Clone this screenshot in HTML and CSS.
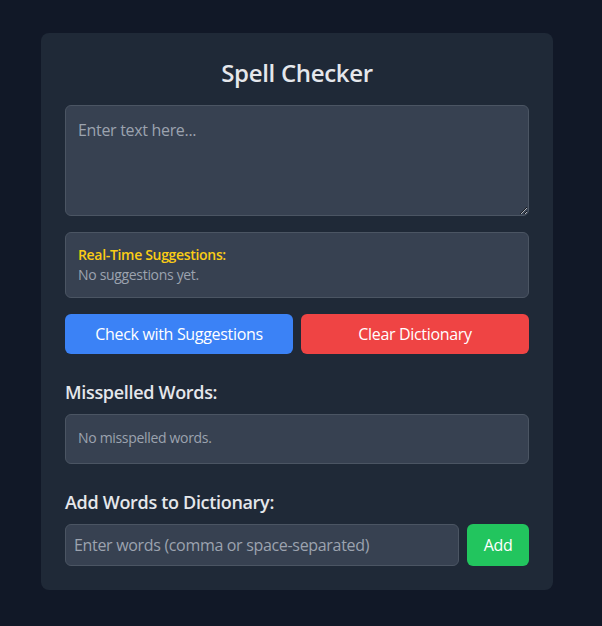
FILE: index.html
```html
<!DOCTYPE html>
<html lang="en">
<head>
<meta charset="utf-8">
<title>Spell Checker</title>
<link rel="stylesheet" href="styles.css">
</head>
<body>
<div class="page">
  <div class="card">
    <h1 class="title">Spell Checker</h1>
    <textarea class="text-input" placeholder="Enter text here..."></textarea>
    <div class="suggest-box">
      <div class="suggest-label">Real-Time Suggestions:</div>
      <div class="muted">No suggestions yet.</div>
    </div>
    <div class="btn-row">
      <button class="btn btn-blue">Check with Suggestions</button>
      <button class="btn btn-red">Clear Dictionary</button>
    </div>
    <h2 class="section-title">Misspelled Words:</h2>
    <div class="result-box"><span class="muted">No misspelled words.</span></div>
    <h2 class="section-title">Add Words to Dictionary:</h2>
    <div class="add-row">
      <input class="word-input" type="text" placeholder="Enter words (comma or space-separated)">
      <button class="btn btn-green">Add</button>
    </div>
  </div>
</div>
</body>
</html>
```
FILE: styles.css
```css
* { box-sizing: border-box; }
html, body { margin: 0; padding: 0; }
body {
  background: #111827;
  font-family: "Open Sans", "Noto Sans", sans-serif;
  letter-spacing: -0.02em;
  color: #e5e7eb;
  font-size: 16px;
  line-height: 24px;
}
.page {
  padding: 33px 0 0 41px;
}
.card {
  width: 512px;
  background: #1f2937;
  border-radius: 8px;
  padding: 24px;
  display: flex;
  flex-direction: column;
}
.title {
  margin: 0 0 16px;
  text-align: center;
  font-size: 24px;
  line-height: 32px;
  font-weight: 600;
  color: #e5e7eb;
}
.text-input {
  display: block;
  width: 100%;
  height: 111px;
  padding: 12px;
  background: #374151;
  border: 1px solid #4b5563;
  border-radius: 6px;
  color: #e5e7eb;
  font-family: inherit;
  letter-spacing: inherit;
  font-size: 16px;
  line-height: 24px;
  resize: vertical;
  margin: 0;
}
.text-input::placeholder, .word-input::placeholder { color: #9ca3af; }
.suggest-box {
  margin-top: 16px;
  padding: 12px;
  background: #374151;
  border: 1px solid #4b5563;
  border-radius: 6px;
  font-size: 14px;
  line-height: 20px;
}
.suggest-label {
  color: #facc15;
  font-weight: 600;
}
.muted { color: #9ca3af; font-size: 14px; line-height: 20px; }
.btn-row {
  margin-top: 16px;
  display: grid;
  grid-template-columns: 1fr 1fr;
  gap: 8px;
}
.btn {
  border: none;
  border-radius: 6px;
  color: #ffffff;
  font-family: inherit;
  letter-spacing: inherit;
  font-size: 16px;
  line-height: 24px;
  padding: 8px 16px;
  margin: 0;
}
.btn-blue { background: #3b82f6; }
.btn-red { background: #ef4444; }
.btn-green { background: #22c55e; min-width: 62px; }
.section-title {
  margin: 24px 0 8px;
  font-size: 18px;
  line-height: 28px;
  font-weight: 600;
  color: #e5e7eb;
}
.result-box {
  min-height: 50px;
  padding: 10px 12px 12px;
  background: #374151;
  border: 1px solid #4b5563;
  border-radius: 6px;
}
.add-row {
  display: flex;
  gap: 8px;
}
.word-input {
  flex: 1;
  min-width: 0;
  padding: 8px;
  background: #374151;
  border: 1px solid #4b5563;
  border-radius: 6px;
  color: #e5e7eb;
  font-family: inherit;
  letter-spacing: inherit;
  font-size: 16px;
  line-height: 24px;
  margin: 0;
}
```
